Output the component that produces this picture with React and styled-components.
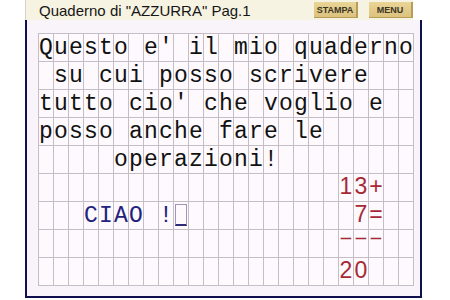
import React from "react";
import styled, { createGlobalStyle } from "styled-components";

const GlobalStyle = createGlobalStyle`
    body {
        margin: 0;
        background-color: #fff;
        font-family: "Liberation Sans", Arial, sans-serif;
    }
`;

const COLS = 25;
const ROWS = 9;

const Page = styled.div`
    width: 397px;
    padding-left: 25px;
`;

const TitleBar = styled.div`
    width: 388px;
    height: 20px;
    box-sizing: border-box;
    display: flex;
    align-items: center;
    justify-content: space-between;
    padding-left: 13px;
    background-color: #f7f3e2;
    border-left: 1px solid #d8d4c6;
`;

const Title = styled.span`
    font-size: 15px;
    color: #161616;
    white-space: pre;
`;

const Buttons = styled.div`
    display: flex;
    gap: 11px;
    height: 100%;
    align-items: center;
`;

const Button = styled.button`
    width: 44px;
    height: 16px;
    padding: 0;
    border: none;
    border-right: 2px solid #b99c55;
    border-bottom: 1px solid #b99c55;
    background: linear-gradient(#e9d597, #dcc27e);
    font-family: "Liberation Sans", Arial, sans-serif;
    font-weight: bold;
    font-size: 9px;
    color: #3a3424;
    cursor: pointer;
`;

const Frame = styled.div`
    border: 2px solid #10104c;
    border-top: none;
    padding: 13px 6px 10px 11px;
    background-color: #f9f4f9;
`;

const Grid = styled.div`
    display: flex;
    flex-direction: column;
    width: fit-content;
    border-top: 1px solid #c6bec6;
    border-left: 1px solid #c6bec6;
    background-color: #fdf9fd;
`;

const Row = styled.div`
    display: flex;
`;

const Cell = styled.div`
    width: 15px;
    height: 28px;
    box-sizing: border-box;
    border-right: 1px solid #c6bec6;
    border-bottom: 1px solid #c6bec6;
    display: flex;
    justify-content: center;
`;

const tones = {
    text: { color: "#111", font: '"Liberation Mono", "Courier New", monospace', size: "23px", line: "29px" },
    name: { color: "#22227e", font: '"Liberation Mono", "Courier New", monospace', size: "23px", line: "29px" },
    sum: { color: "#a52a36", font: '"Liberation Sans", Arial, sans-serif', size: "23px", line: "25px" },
};

const Char = styled.span`
    font-family: ${(p) => tones[p.$tone].font};
    font-size: ${(p) => tones[p.$tone].size};
    line-height: ${(p) => tones[p.$tone].line};
    color: ${(p) => tones[p.$tone].color};
    white-space: pre;
`;

// il trattino della somma e' piu' largo e piu' alto nella casella
const Dash = styled(Char)`
    font-size: 18px;
    line-height: 16px;
    transform: scaleX(2.4);
`;

const Cursor = styled.span`
    width: 12px;
    height: 22px;
    margin-top: 2px;
    margin-left: -1px;
    box-sizing: border-box;
    border: 1px solid #9a98b6;
    border-bottom: 2px solid #2c2c78;
`;

// cosa c'e' scritto sul quaderno: riga, colonna, testo, tipo
const writing = [
    [0, 0, "Questo e' il mio quaderno", "text"],
    [1, 1, "su cui posso scrivere", "text"],
    [2, 0, "tutto cio' che voglio e", "text"],
    [3, 0, "posso anche fare le", "text"],
    [4, 5, "operazioni!", "text"],
    [5, 20, "13+", "sum"],
    [6, 3, "CIAO !", "name"],
    [6, 21, "7=", "sum"],
    [7, 20, "---", "sum"],
    [8, 20, "20", "sum"],
];
const cursor = { row: 6, col: 9 };

const buildPage = () => {
    const page = Array.from({ length: ROWS }, () => Array(COLS).fill(null));
    writing.forEach(([row, col, text, tone]) => {
        [...text].forEach((ch, i) => {
            if (ch !== " ") page[row][col + i] = { ch, tone };
        });
    });
    return page;
};

const App = () => {
    const page = buildPage();

    return (
        <Page>
            <GlobalStyle />
            <TitleBar>
                <Title>Quaderno di "AZZURRA" Pag.1</Title>
                <Buttons>
                    <Button>STAMPA</Button>
                    <Button>MENU</Button>
                </Buttons>
            </TitleBar>
            <Frame>
                <Grid>
                    {page.map((cells, r) => (
                        <Row key={r}>
                            {cells.map((cell, c) => {
                                const Glyph = cell && cell.ch === "-" ? Dash : Char;
                                return (
                                    <Cell key={c}>
                                        {cell && <Glyph $tone={cell.tone}>{cell.ch}</Glyph>}
                                        {r === cursor.row && c === cursor.col && <Cursor />}
                                    </Cell>
                                );
                            })}
                        </Row>
                    ))}
                </Grid>
            </Frame>
        </Page>
    );
};

export default App;
